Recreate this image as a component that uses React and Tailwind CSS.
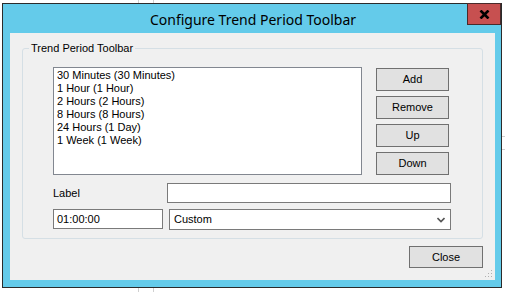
import React from 'react';

const items = [
  '30 Minutes (30 Minutes)',
  '1 Hour (1 Hour)',
  '2 Hours (2 Hours)',
  '8 Hours (8 Hours)',
  '24 Hours (1 Day)',
  '1 Week (1 Week)',
];

const Btn = ({ children, className = '' }) => (
  <button
    className={`flex items-center justify-center border border-[#707070] bg-[#e1e1e1] text-[11px] font-normal text-black ${className}`}
  >
    {children}
  </button>
);

const App = () => {
  return (
    <div
      className="relative w-[505px] h-[292px] overflow-hidden bg-white"
      style={{ fontFamily: '"Liberation Sans", Arial, sans-serif' }}
    >
      {/* desktop behind the dialog */}
      <div className="absolute left-[138px] top-0 h-full w-px bg-[#d0d0d0]" />
      <div className="absolute left-[153px] top-0 h-full w-px bg-[#d0d0d0]" />
      <div className="absolute left-[500px] top-[136px] h-px w-[10px] bg-[#d0d0d0]" />
      <div className="absolute left-[500px] top-[149px] h-px w-[10px] bg-[#d0d0d0]" />

      {/* dialog window */}
      <div className="absolute left-[2px] top-[3px] w-[500px] h-[285px] border border-[#2b2b2b] bg-[#64cbea] flex flex-col pl-[7px] pr-[6px] pb-[7px]">
        <div className="relative h-[29px] shrink-0 flex items-center justify-center">
          <span
            className="text-[14px] text-black pt-[1px] pl-[1px]"
            style={{ fontFamily: '"Noto Sans", "Open Sans", sans-serif' }}
          >
            Configure Trend Period Toolbar
          </span>
          <div className="absolute right-[-6px] top-[-1px] w-[34px] h-[22px] bg-[#c75050] border border-[#4a2a2a] flex items-center justify-center">
            <svg width="11" height="9" viewBox="0 0 11 9">
              <path d="M1.5 0.5 L9.5 8.5 M9.5 0.5 L1.5 8.5" stroke="#000" strokeWidth="2.6" />
            </svg>
          </div>
        </div>

        <div className="relative flex-1 bg-[#f0f0f0] flex flex-col">
          {/* group box */}
          <div className="relative ml-[12px] mt-[15px] w-[461px] h-[191px] border border-[#d5dfe5] rounded-[3px] pl-[30px] pt-[18px]">
            <span className="absolute left-[6px] top-[-8px] px-[2px] bg-[#f0f0f0] text-[11px] leading-[14px] text-black">
              Trend Period Toolbar
            </span>

            <div className="flex">
              <div className="w-[309px] h-[108px] border border-[#828790] bg-white pl-[3px] pt-[1px] text-[11px] leading-[13px] text-black">
                {items.map((t) => (
                  <div key={t}>{t}</div>
                ))}
              </div>
              <div className="ml-[14px] mt-[1px] flex flex-col gap-[5px]">
                <Btn className="w-[73px] h-[23px]">Add</Btn>
                <Btn className="w-[73px] h-[23px]">Remove</Btn>
                <Btn className="w-[73px] h-[23px]">Up</Btn>
                <Btn className="w-[73px] h-[23px]">Down</Btn>
              </div>
            </div>

            <div className="mt-[8px] flex items-center">
              <span className="w-[114px] text-[11px] text-black">Label</span>
              <div className="w-[284px] h-[20px] border border-[#7a7a7a] bg-white" />
            </div>

            <div className="mt-[6px] flex">
              <div className="w-[110px] h-[20px] border border-[#7a7a7a] bg-white flex items-center pl-[3px] text-[11px] text-black">
                01:00:00
              </div>
              <div className="ml-[6px] w-[282px] h-[21px] border border-[#7a7a7a] bg-white flex items-center justify-between pl-[4px] pr-[5px] text-[11px] text-black">
                <span>Custom</span>
                <svg width="8" height="6" viewBox="0 0 8 6">
                  <path d="M0.5 1 L4 4.5 L7.5 1" stroke="#555" strokeWidth="1.6" fill="none" />
                </svg>
              </div>
            </div>
          </div>

          <div className="mt-[7px] flex justify-end pr-[12px]">
            <Btn className="w-[74px] h-[22px]">Close</Btn>
          </div>

          {/* size grip */}
          <svg className="absolute right-[2px] bottom-[2px]" width="8" height="8" viewBox="0 0 8 8">
            <rect x="6" y="0" width="1" height="1" fill="#b0b0b0" />
            <rect x="3" y="3" width="1" height="1" fill="#b0b0b0" />
            <rect x="6" y="3" width="1" height="1" fill="#b0b0b0" />
            <rect x="0" y="6" width="1" height="1" fill="#b0b0b0" />
            <rect x="3" y="6" width="1" height="1" fill="#b0b0b0" />
            <rect x="6" y="6" width="1" height="1" fill="#b0b0b0" />
          </svg>
        </div>
      </div>
    </div>
  );
};

export default App;
